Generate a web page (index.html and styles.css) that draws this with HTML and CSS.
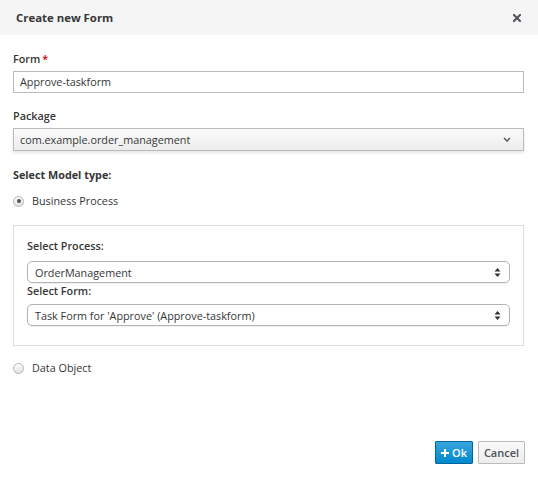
FILE: index.html
```html
<!DOCTYPE html>
<html>
<head>
<meta charset="utf-8">
<link rel="stylesheet" href="styles.css">
</head>
<body>
<div class="modal">
  <div class="modal-header">
    <h4 class="modal-title">Create new Form</h4>
    <span class="close" aria-label="Close">
      <svg width="8" height="8" viewBox="0 0 8 8"><path d="M1 1 L7 7 M7 1 L1 7" stroke="#4d5258" stroke-width="2" stroke-linecap="square"/></svg>
    </span>
  </div>
  <div class="modal-body">
    <div class="form-group">
      <label class="control-label">Form<span class="req">*</span></label>
      <div class="form-control text-input">Approve-taskform</div>
    </div>
    <div class="form-group">
      <label class="control-label">Package</label>
      <div class="form-control pkg-select">
        <span>com.example.order_management</span>
        <svg class="chev" width="8" height="5" viewBox="0 0 8 5"><path d="M1 1 L4 4 L7 1" fill="none" stroke="#4d5258" stroke-width="1.4"/></svg>
      </div>
    </div>
    <div class="model-label">Select Model type:</div>
    <div class="radio-row">
      <span class="radio checked"></span><span class="radio-text">Business Process</span>
    </div>
    <div class="panel">
      <label class="sub-label first">Select Process:</label>
      <div class="native-select">
        <span>OrderManagement</span>
        <svg class="updown" width="7" height="11" viewBox="0 0 7 11"><path d="M3.5 1 L6.5 4.5 L0.5 4.5 Z M3.5 10 L6.5 6.5 L0.5 6.5 Z" fill="#333"/></svg>
      </div>
      <label class="sub-label second">Select Form:</label>
      <div class="native-select">
        <span>Task Form for 'Approve' (Approve-taskform)</span>
        <svg class="updown" width="7" height="11" viewBox="0 0 7 11"><path d="M3.5 1 L6.5 4.5 L0.5 4.5 Z M3.5 10 L6.5 6.5 L0.5 6.5 Z" fill="#333"/></svg>
      </div>
    </div>
    <div class="radio-row data-row">
      <span class="radio"></span><span class="radio-text">Data Object</span>
    </div>
  </div>
  <div class="modal-footer">
    <button class="btn btn-primary"><svg width="8" height="8" viewBox="0 0 8 8"><path d="M4 0 V8 M0 4 H8" stroke="#fff" stroke-width="2"/></svg>Ok</button>
    <button class="btn btn-default">Cancel</button>
  </div>
</div>
</body>
</html>
```

FILE: styles.css
```css
* { box-sizing: border-box; }
html, body { margin: 0; padding: 0; background: #fff; }
body {
  font-family: "Open Sans", "Noto Sans", sans-serif;
  font-size: 10.8px;
  color: #363636;
  width: 538px;
  height: 477px;
}
.modal { display: flex; flex-direction: column; height: 477px; }
.modal-header {
  height: 35px;
  background: #f5f5f5;
  display: flex;
  align-items: center;
  justify-content: space-between;
  padding: 0 17px 0 16px;
  flex: none;
}
.modal-title { margin: 0; font-size: 11.4px; font-weight: 700; color: #363636; }
.close { display: flex; align-items: center; }
.modal-body { padding: 15px 14px 0 13px; }
.form-group { margin-bottom: 14px; }
.control-label {
  display: block;
  font-weight: 600;
  line-height: 18px;
  margin-bottom: 3px;
}
.req { color: #c00; margin-left: 2px; }
.form-control {
  height: 22px;
  border: 1px solid #bbb;
  padding: 0 6px;
  line-height: 20px;
  color: #363636;
}
.pkg-select {
  height: 23px;
  line-height: 21px;
  display: flex;
  justify-content: space-between;
  align-items: center;
  background: linear-gradient(#fafafa, #ededed);
  box-shadow: 0 2px 3px rgba(3,3,3,0.1);
  padding: 0 12px 0 6px;
}
.model-label { font-weight: 700; line-height: 18px; margin-top: 15px; }
.radio-row {
  display: flex;
  align-items: center;
  line-height: 18px;
  margin-top: 8px;
}
.radio {
  width: 11px;
  height: 11px;
  border-radius: 50%;
  border: 1px solid #b4b4b4;
  background: linear-gradient(#fdfdfd, #e2e2e2);
  margin: 0 0 0 0;
  position: relative;
  flex: none;
}
.radio.checked::after {
  content: "";
  position: absolute;
  left: 2.5px; top: 2.5px;
  width: 4px; height: 4px;
  border-radius: 50%;
  background: #555;
}
.radio-text { margin-left: 8px; }
.panel {
  margin-top: 15px;
  border: 1px solid #ddd;
  padding: 12px 13px 19px 13px;
}
.sub-label { display: block; font-weight: 600; line-height: 16px; }
.sub-label.first { margin-bottom: 7px; }
.sub-label.second { margin-bottom: 5px; }
.native-select {
  height: 22px;
  border: 1px solid #b3b3b3;
  border-radius: 5px;
  background: #fff;
  display: flex;
  justify-content: space-between;
  align-items: center;
  padding: 0 8px 0 7px;
  box-shadow: 0 1px 1px rgba(0,0,0,0.06);
}
.data-row { margin-top: 13px; }
.modal-footer {
  display: flex;
  justify-content: flex-end;
  gap: 5px;
  padding: 0 13px 0 0;
  margin-top: 64px;
}
.btn {
  height: 23px;
  font-family: inherit;
  font-size: 11px;
  font-weight: 600;
  border-radius: 1px;
  padding: 0 6px;
  display: flex;
  align-items: center;
  gap: 3px;
  cursor: pointer;
}
.btn-primary {
  background: linear-gradient(#39a5dc, #0088ce);
  border: 1px solid #00659c;
  color: #fff;
  width: 38px;
  padding: 0 5px;
  justify-content: center;
}
.btn-default {
  background: linear-gradient(#fafafa, #ededed);
  border: 1px solid #bbb;
  color: #4d5258;
  width: 47px;
  justify-content: center;
}
```
